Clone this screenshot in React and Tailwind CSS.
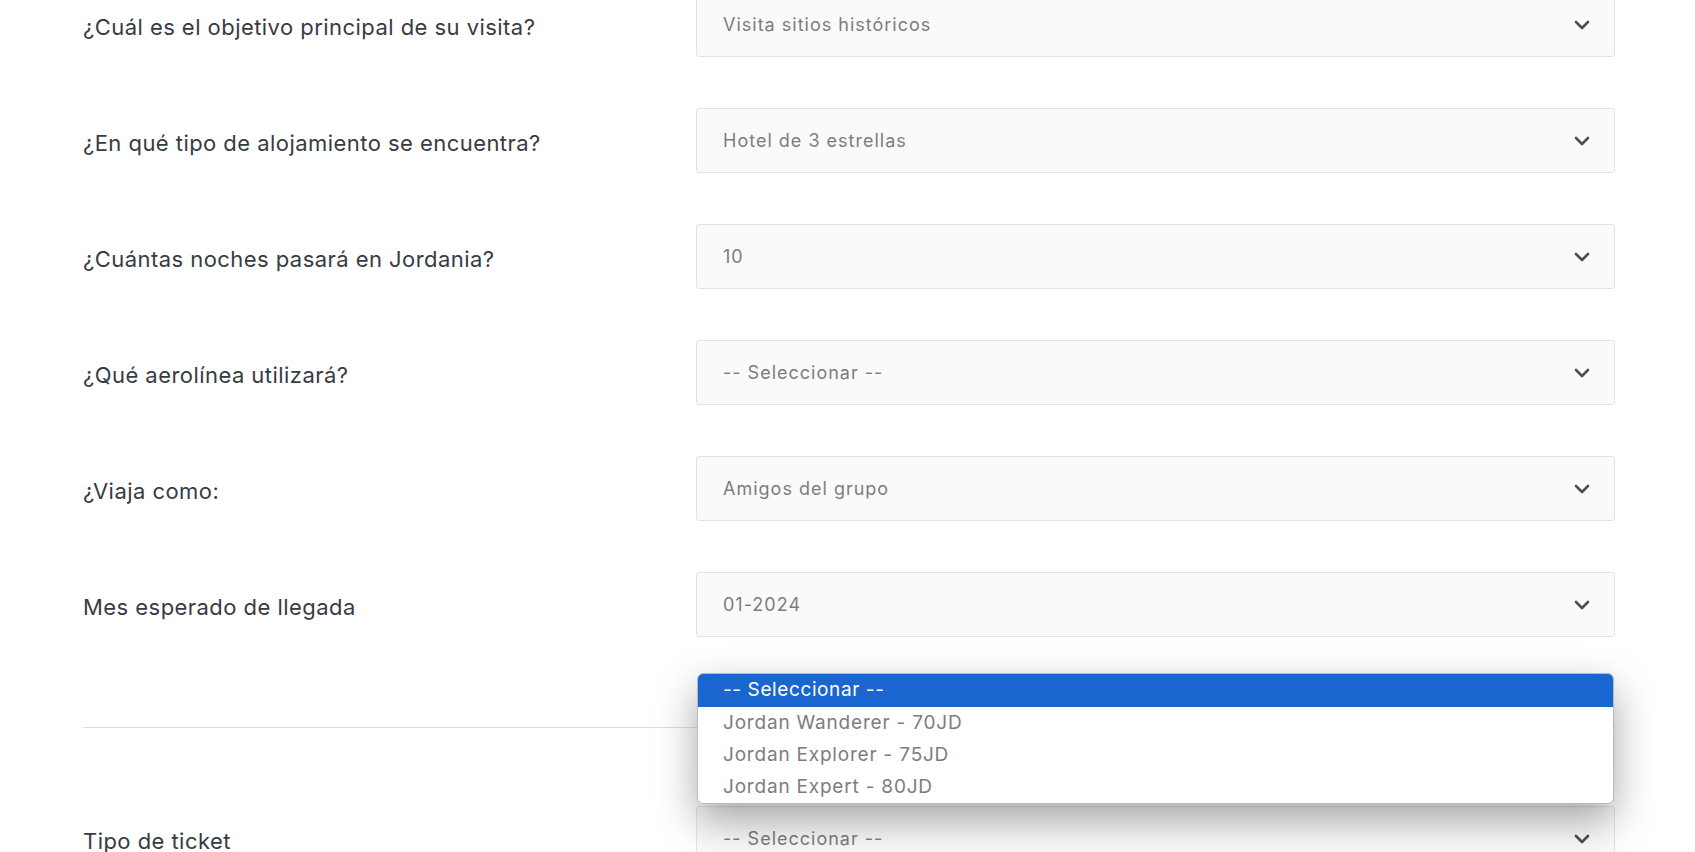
import React from 'react';

const preguntas = [
  { label: '¿Cuál es el objetivo principal de su visita?', value: 'Visita sitios históricos' },
  { label: '¿En qué tipo de alojamiento se encuentra?', value: 'Hotel de 3 estrellas' },
  { label: '¿Cuántas noches pasará en Jordania?', value: '10' },
  { label: '¿Qué aerolínea utilizará?', value: '-- Seleccionar --' },
  { label: '¿Viaja como:', value: 'Amigos del grupo' },
  { label: 'Mes esperado de llegada', value: '01-2024' },
];

const opcionesTicket = ['Jordan Wanderer - 70JD', 'Jordan Explorer - 75JD', 'Jordan Expert - 80JD'];

// Flecha del select
const Chevron = () => (
  <svg width="16" height="10" viewBox="0 0 16 10" fill="none">
    <path d="M2 2l6 6 6-6" stroke="#4b4f55" strokeWidth="2.6" strokeLinecap="round" strokeLinejoin="round" />
  </svg>
);

const SelectBox = ({ value, children }) => (
  <div className="relative">
    <div className="h-[65px] flex items-center justify-between pl-[26px] pr-[24px] bg-[#fafafa] border border-[#e3e3e3] rounded-[3px]">
      <span className="text-[18px] text-[#7d7d7d] tracking-[1px] mb-[1px]">{value}</span>
      <Chevron />
    </div>
    {children}
  </div>
);

const Fila = ({ label, value, children }) => (
  <div className="grid grid-cols-[613px_1fr] items-center">
    <label className="pt-[6px] text-[22px] tracking-[0.45px] text-[#373b43]">{label}</label>
    <SelectBox value={value}>{children}</SelectBox>
  </div>
);

export default function App() {
  return (
    <div className="h-[852px] overflow-hidden bg-white" style={{ fontFamily: 'Inter, "Noto Sans", sans-serif' }}>
      <div className="mt-[-8px] ml-[83px] w-[1532px]">
        <div className="flex flex-col gap-[51px]">
          {preguntas.map((p) => (
            <Fila key={p.label} label={p.label} value={p.value} />
          ))}
        </div>

        <div className="mt-[90px] h-px bg-[#dedede]" />

        <div className="mt-[78px]">
          <Fila label="Tipo de ticket" value="-- Seleccionar --">
            {/* lista desplegada del select */}
            <div className="absolute left-px right-px bottom-[calc(100%+2px)] bg-white border border-[#b9b9b9] rounded-[6px] overflow-hidden shadow-[0_16px_40px_rgba(0,0,0,0.35)]">
              <div className="h-[33px] flex items-center pl-[25px] bg-[#1a66d1] text-white text-[19px] tracking-[0.6px]">-- Seleccionar --</div>
              {opcionesTicket.map((o) => (
                <div key={o} className="h-[32px] flex items-center pl-[25px] text-[19px] tracking-[0.8px] text-[#7d7d7d]">{o}</div>
              ))}
            </div>
          </Fila>
        </div>
      </div>
    </div>
  );
}
